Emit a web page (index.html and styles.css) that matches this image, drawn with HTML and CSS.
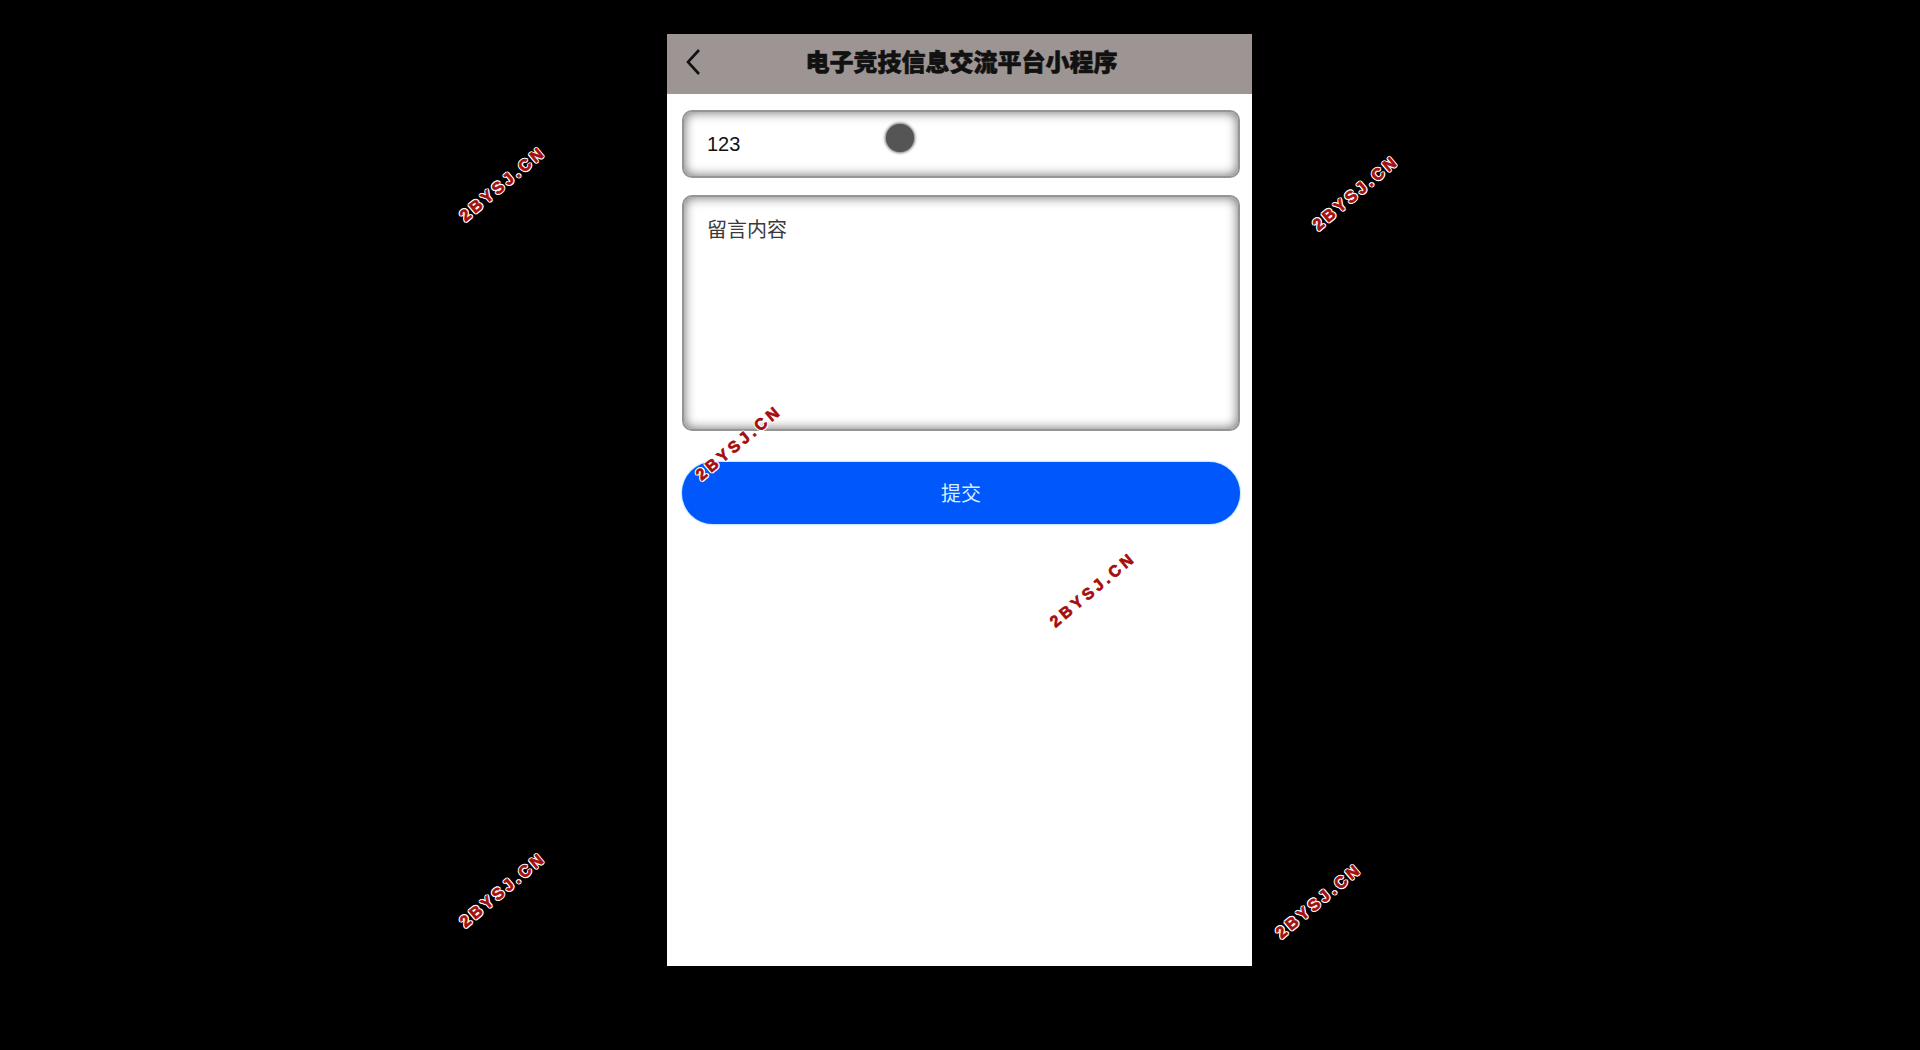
FILE: index.html
```html
<!DOCTYPE html>
<html lang="zh">
  <head>
    <meta charset="UTF-8" />
    <meta name="viewport" content="width=device-width, initial-scale=1.0" />
    <title>电子竞技信息交流平台小程序</title>
    <link rel="stylesheet" href="styles.css">
  </head>
  <body>
    <div class="phone">
      <header class="topbar">
        <span class="back">
          <svg width="16" height="28" viewBox="0 0 16 28">
            <path d="M14 2 L3 14 L14 26" fill="none" stroke="#111" stroke-width="2.6" stroke-linejoin="miter" />
          </svg>
        </span>
        <h1>电子竞技信息交流平台小程序</h1>
      </header>
      <main class="form">
        <input class="field title" type="text" value="123" />
        <textarea class="field content" placeholder="留言内容"></textarea>
        <button class="btn submit">提交</button>
      </main>
      <div class="touch"></div>
    </div>

    <div class="mark" style="left: 503px; top: 184px;">2BYSJ.CN</div>
    <div class="mark" style="left: 1356px; top: 193px;">2BYSJ.CN</div>
    <div class="mark" style="left: 739px; top: 443px;">2BYSJ.CN</div>
    <div class="mark" style="left: 1093px; top: 590px;">2BYSJ.CN</div>
    <div class="mark" style="left: 503px; top: 890px;">2BYSJ.CN</div>
    <div class="mark" style="left: 1319px; top: 901px;">2BYSJ.CN</div>
  </body>
</html>
```

FILE: styles.css
```css
* {
  margin: 0;
  padding: 0;
  box-sizing: border-box;
}

html,
body {
  height: 100%;
}

body {
  background-color: #000;
  font-family: "Liberation Sans", "Noto Sans CJK SC", sans-serif;
  overflow: hidden;
}

/* PHONE */
.phone {
  position: relative;
  width: 585px;
  height: 932px;
  margin: 34px 0 0 667px;
  background-color: #fff;
}

.topbar {
  height: 60px;
  background-color: #9d9593;
  display: flex;
  align-items: center;
  justify-content: center;
  position: relative;
  padding-bottom: 6px;
}

.back {
  position: absolute;
  left: 18px;
  top: 14px;
  display: flex;
}

.topbar h1 {
  font-family: "Noto Sans CJK SC", sans-serif;
  font-size: 24px;
  font-weight: 900;
  color: #111;
  -webkit-text-stroke: 0.6px #111;
  line-height: 1;
  margin-left: 4px;
}

/* FORM */
.form {
  display: flex;
  flex-direction: column;
  padding: 16px 12px 0 15px;
}

.field {
  width: 100%;
  border: 2px solid #959595;
  border-radius: 10px;
  box-shadow: inset 0 0 12px rgba(0, 0, 0, 0.6);
  background: #fff;
  font-family: "Liberation Sans", "Noto Sans CJK SC", sans-serif;
  font-size: 20px;
  color: #111;
  outline: none;
  padding: 0 23px;
}

.title {
  height: 68px;
}

.content {
  height: 236px;
  margin-top: 17px;
  padding-top: 17px;
  resize: none;
  font-family: "Noto Sans CJK SC", sans-serif;
}

.content::placeholder {
  color: #3a3a3a;
}

.btn {
  border: none;
  cursor: pointer;
  font-family: "Noto Sans CJK SC", sans-serif;
}

.submit {
  height: 62px;
  margin-top: 31px;
  border-radius: 31px;
  background-color: #0058fc;
  box-shadow: 0 0 2px #3aa0ff;
  color: #d6efff;
  font-size: 20px;
  padding-bottom: 2px;
}

/* touch marker */
.touch {
  position: absolute;
  left: 219px;
  top: 90px;
  width: 28px;
  height: 28px;
  border-radius: 50%;
  background-color: #555;
  box-shadow: 0 0 3px 1px #666;
}

/* WATERMARK */
.mark {
  position: absolute;
  transform: translate(-50%, -50%) rotate(-40deg);
  font-family: "Liberation Sans", sans-serif;
  font-weight: bold;
  font-size: 16px;
  letter-spacing: 3.5px;
  color: #a50d0d;
  -webkit-text-stroke: 0.7px #a50d0d;
  white-space: nowrap;
  text-shadow: 1.5px 0 0 #fff, -1.5px 0 0 #fff, 0 1.5px 0 #fff, 0 -1.5px 0 #fff,
    1px 1px 0 #fff, -1px -1px 0 #fff, 1px -1px 0 #fff, -1px 1px 0 #fff;
}
```
